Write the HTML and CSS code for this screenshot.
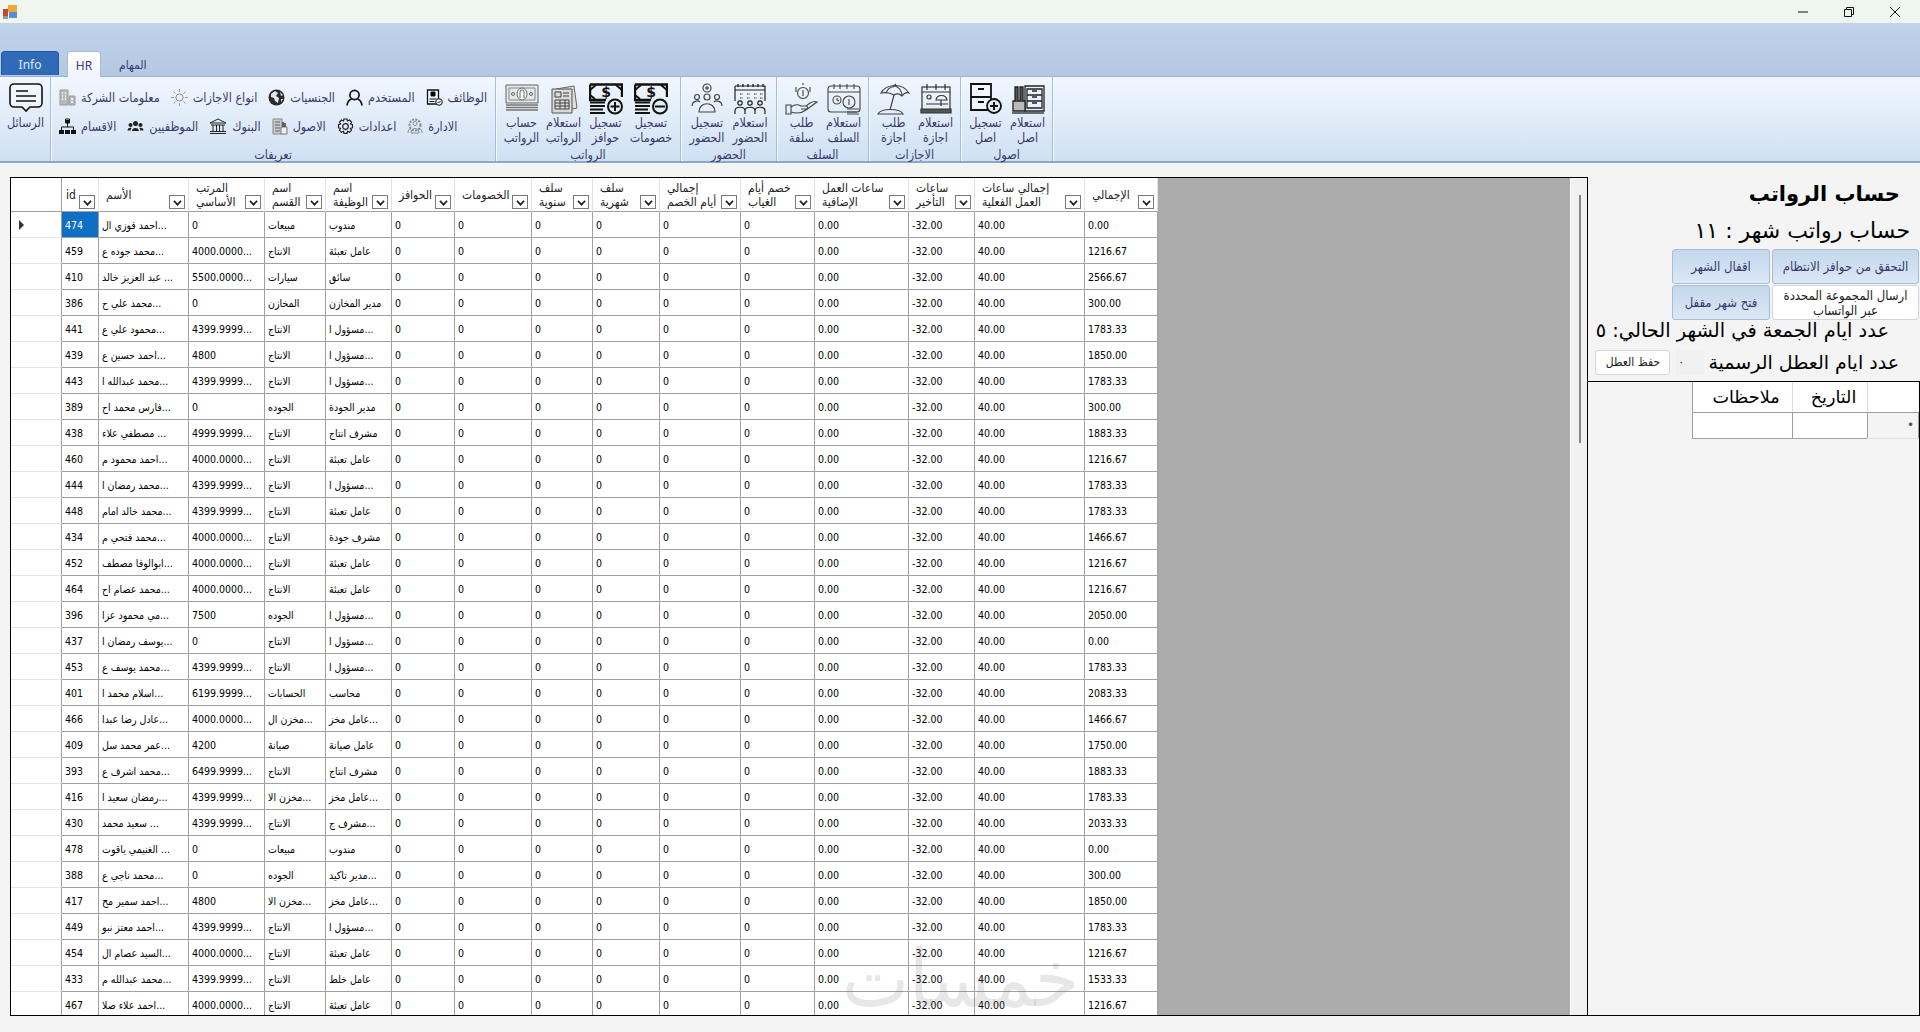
FILE: index.html
```html
<!DOCTYPE html>
<html lang="ar">
<head>
<meta charset="utf-8">
<title>حساب الرواتب</title>
<link rel="stylesheet" href="styles.css">
</head>
<body>
<header class="titlebar">
  <svg class="app-icon" width="14" height="14" viewBox="0 0 14 14"><rect x="5" y="0" width="9" height="7" fill="#f0a63c"/><rect x="6" y="7" width="8" height="6" fill="#4f8fdc"/><rect x="0" y="4" width="5" height="7" fill="#c8452c"/><rect x="0" y="11" width="5" height="3" fill="#999"/></svg>
  <div class="winctl">
    <svg width="12" height="12" viewBox="0 0 12 12"><path d="M1 6h10" stroke="#111" fill="none"/></svg>
    <svg width="12" height="12" viewBox="0 0 12 12"><path d="M1.5 3.5h7v7h-7zM3.5 3.5v-2h7v7h-2" stroke="#111" fill="none"/></svg>
    <svg width="12" height="12" viewBox="0 0 12 12"><path d="M1 1l10 10M11 1L1 11" stroke="#111" fill="none"/></svg>
  </div>
</header>
<nav class="tabs">
  <span class="tab tab-info">Info</span>
  <span class="tab tab-active">HR</span>
  <span class="tab">المهام</span>
</nav>
<section class="ribbon">
  <div class="group g-msg">
    <div class="g-body">
      <div class="lbtn">
        <svg width="34" height="30" viewBox="0 0 34 30"><path d="M5 1h24a4 4 0 0 1 4 4v15a4 4 0 0 1-4 4h-8l-4 4-4-4H5a4 4 0 0 1-4-4V5a4 4 0 0 1 4-4z" fill="#fff" fill-opacity=".3" stroke="#111" stroke-width="1.6"/><path d="M7 8h12M7 13h20M7 18h20" stroke="#111" stroke-width="1.6"/></svg>
        <span class="lbl">الرسائل</span>
      </div>
    </div>
  </div>
  <div class="group g-def">
    <div class="g-rows">
      <div class="srow">
        <span class="sbtn"><svg width="17" height="17" viewBox="0 0 17 17"><path d="M1 1h8v15H1zM10 7h6v9h-6z" fill="#b9b9b9" stroke="#999"/><path d="M3 4h1M6 4h1M3 7h1M6 7h1M3 10h1M6 10h1M12 10h2M12 13h2" stroke="#fff" stroke-width="1.5"/></svg><i>معلومات الشركة</i></span>
        <span class="sbtn"><svg width="17" height="17" viewBox="0 0 17 17"><circle cx="8.5" cy="8.5" r="3.6" fill="none" stroke="#888"/><path d="M8.5 0v3M8.5 14v3M0 8.5h3M14 8.5h3M2.5 2.5l2 2M12.5 12.5l2 2M14.5 2.5l-2 2M4.5 12.5l-2 2" stroke="#999"/></svg><i>انواع الاجازات</i></span>
        <span class="sbtn"><svg width="17" height="17" viewBox="0 0 17 17"><circle cx="8.5" cy="8.5" r="8" fill="#2b2b2b"/><path d="M3 5l4-3 3 2-2 3 3 2-1 5-3-2-1-3-3-1zM12 3l3 3-2 1zM13 10l2 0-2 3z" fill="#dfe8f3"/></svg><i>الجنسيات</i></span>
        <span class="sbtn"><svg width="17" height="17" viewBox="0 0 17 17"><circle cx="8.5" cy="6" r="4.6" fill="none" stroke="#111" stroke-width="1.7"/><path d="M1 16.5c.5-4 3-6 4.5-6.5M16 16.500c-.5-4-3-6-4.500-6.500" fill="none" stroke="#111" stroke-width="1.7"/></svg><i>المستخدم</i></span>
        <span class="sbtn"><svg width="17" height="17" viewBox="0 0 17 17"><path d="M1.500 1h11v14h-11z" fill="#fff" fill-opacity=".4" stroke="#111" stroke-width="1.300"/><path d="M5 3h4v4H5zM3.500 10h7M3.500 12.500h5" stroke="#111"/><circle cx="13" cy="13" r="3.300" fill="#e8f0f9" stroke="#111"/><path d="M11.500 13l1 1 2-2" fill="none" stroke="#111"/></svg><i>الوظائف</i></span>
      </div>
      <div class="srow">
        <span class="sbtn"><svg width="17" height="17" viewBox="0 0 17 17"><path d="M6.500 1h4v4h-4zM8.500 5v4M2.500 12V9h12v3" fill="none" stroke="#111"/><path d="M0 12h5v4H0zM6 12h5v4H6zM12 12h5v4h-5z" fill="#111"/><path d="M6.500 2h4v3h-4z" fill="#111"/></svg><i>الاقسام</i></span>
        <span class="sbtn"><svg width="17" height="17" viewBox="0 0 17 17"><g fill="#222"><circle cx="8.500" cy="5.500" r="2.500"/><circle cx="3.500" cy="7" r="2"/><circle cx="13.500" cy="7" r="2"/><path d="M5 13c0-4 7-4 7 0zM.5 12.500c0-3 3-3 4-2.500l-1 2.500zM16.500 12.500c0-3-3-3-4-2.500l1 2.500z"/></g></svg><i>الموظفيين</i></span>
        <span class="sbtn"><svg width="18" height="17" viewBox="0 0 18 17"><path d="M1 5l8-4 8 4zM2 7h14M1 15.500h16M1 13.500h16M4 7v6M7.500 7v6M10.500 7v6M14 7v6" fill="none" stroke="#222"/></svg><i>البنوك</i></span>
        <span class="sbtn"><svg width="16" height="17" viewBox="0 0 16 17"><path d="M1 1h9v15H1z" fill="#c9c9c9" stroke="#888"/><path d="M3 4h5M3 7h5M3 10h5M3 13h5" stroke="#666"/><path d="M9 9h6v7H9z" fill="#eee" stroke="#777"/><path d="M11 9V4M13 9V5" stroke="#333" stroke-width="1.400"/></svg><i>الاصول</i></span>
        <span class="sbtn"><svg width="17" height="17" viewBox="0 0 17 17"><path d="M7 1h3l.5 2 2-1 2 2.200-1 1.800 2 .7v3l-2 .6 1 1.900-2 2.100-2-1-.5 2H7l-.5-2-2 1-2-2.100 1-1.900-2-.6v-3l2-.7-1-1.800 2-2.200 2 1z" fill="none" stroke="#222" stroke-width="1.200"/><circle cx="8.500" cy="8.500" r="2.800" fill="none" stroke="#222" stroke-width="1.200"/></svg><i>اعدادات</i></span>
        <span class="sbtn"><svg width="16" height="17" viewBox="0 0 16 17"><g fill="none" stroke="#8a8a8a"><circle cx="8" cy="7" r="5.500" stroke-dasharray="2 1.200" stroke-width="2"/><circle cx="8" cy="5.500" r="2"/><path d="M4 15c0-6 8-6 8 0z"/><path d="M1 15c0-3 1-4 3-4M15 15c0-3-1-4-3-4"/></g></svg><i>الادارة</i></span>
      </div>
    </div>
    <div class="g-title">تعريفات</div>
  </div>
  <div class="group g-pay">
    <div class="g-body">
      <div class="lbtn">
        <svg width="34" height="32" viewBox="0 0 34 32"><path d="M1 2h32v18H1z" fill="#e4e8ea" stroke="#666"/><path d="M4 5h26v12H4z" fill="none" stroke="#888"/><ellipse cx="17" cy="11" rx="5" ry="6" fill="#fff" stroke="#666"/><path d="M15 15V9a2 2 0 0 1 4 0v6" fill="none" stroke="#666"/><circle cx="8" cy="11" r="1.500" fill="none" stroke="#666"/><circle cx="26" cy="11" r="1.500" fill="none" stroke="#666"/><path d="M1 22h32M1 24.500h32M1 27h32" stroke="#777" stroke-width="1.300"/></svg>
        <span class="lbl">حساب<br>الرواتب</span>
      </div>
      <div class="lbtn">
        <svg width="34" height="32" viewBox="0 0 34 32"><path d="M9 6l18-3 3 22-4 1z" fill="#ddd" stroke="#666"/><path d="M5 6h20v24H5z" fill="#d9d9d9" stroke="#555"/><path d="M8 9h6v5H8zM16 10h6M16 13h6M8 17h14v9H8zM8 20h14M8 23h14M13 17v9M18 17v9" fill="none" stroke="#444"/></svg>
        <span class="lbl">استعلام<br>الرواتب</span>
      </div>
      <div class="lbtn">
        <svg width="34" height="32" viewBox="0 0 34 32"><use href="#bill"/><path d="M26 19v9M21.500 23.500h9" stroke="#111" stroke-width="2"/></svg>
        <span class="lbl">تسجيل<br>حوافز</span>
      </div>
      <div class="lbtn lbtn-wide">
        <svg width="34" height="32" viewBox="0 0 34 32"><use href="#bill"/><path d="M21 23.500h10" stroke="#111" stroke-width="2"/></svg>
        <span class="lbl">تسجيل<br>خصومات</span>
      </div>
    </div>
    <div class="g-title">الرواتب</div>
  </div>
  <div class="group g-att">
    <div class="g-body">
      <div class="lbtn lbtn-m">
        <svg width="34" height="32" viewBox="0 0 34 32"><g fill="none" stroke="#444" stroke-width="1.200"><circle cx="17" cy="5" r="4"/><circle cx="17" cy="14" r="3"/><circle cx="7" cy="14" r="2.500"/><circle cx="27" cy="14" r="2.500"/><path d="M9 29c0-11 16-11 16 0zM2 23c0-5 6-6 8-4M32 23c0-5-6-6-8-4"/></g><circle cx="17" cy="5" r="1.800" fill="#555"/></svg>
        <span class="lbl">تسجيل<br>الحضور</span>
      </div>
      <div class="lbtn lbtn-m">
        <svg width="34" height="32" viewBox="0 0 34 32"><g fill="none" stroke="#222" stroke-width="1.200"><path d="M2 3h30v15M2 3v15M2 7h30"/><path d="M5 1v3M10 1v3M15 1v3M20 1v3M25 1v3M30 1v3" stroke-width="1.400"/><path d="M7 11h3M14 11h3M21 11h3M27 11h3M7 15h3M14 15h3M21 15h3M27 15h3" stroke-dasharray="1.500 1"/><circle cx="7" cy="20" r="2.200"/><circle cx="17" cy="20" r="2.200"/><circle cx="27" cy="20" r="2.200"/><path d="M2 31v-3c0-5 10-5 10 0v3M12 31v-3c0-5 10-5 10 0v3M22 31v-3c0-5 10-5 10 0v3"/></g></svg>
        <span class="lbl">استعلام<br>الحضور</span>
      </div>
    </div>
    <div class="g-title">الحضور</div>
  </div>
  <div class="group g-adv">
    <div class="g-body">
      <div class="lbtn">
        <svg width="34" height="32" viewBox="0 0 34 32"><g fill="none" stroke="#444" stroke-width="1.100"><circle cx="18" cy="10" r="5.500"/><path d="M18 7v6M11 4v5M25 4v5M18 0v2"/><path d="M1 22h5v9H1zM6 24c4-3 7-3 10-1h5c2 0 2 3 0 3h-5M6 29c6 2 11 1 15-2l11-8c-2-1-5 0-7 1l-4 3"/></g></svg>
        <span class="lbl">طلب<br>سلفة</span>
      </div>
      <div class="lbtn">
        <svg width="34" height="32" viewBox="0 0 34 32"><g fill="none" stroke="#444" stroke-width="1.100"><rect x="1" y="3" width="32" height="26" rx="3"/><path d="M1 9h32M7 1v5M13 1v5M20 1v5M27 1v5"/><circle cx="10" cy="17" r="4"/><path d="M10 15v2l2 1"/><circle cx="22" cy="19" r="6"/><path d="M22 16v6M20 26h12M20 29h10M20 31h12"/></g></svg>
        <span class="lbl">استعلام<br>السلف</span>
      </div>
    </div>
    <div class="g-title">السلف</div>
  </div>
  <div class="group g-vac">
    <div class="g-body">
      <div class="lbtn">
        <svg width="34" height="32" viewBox="0 0 34 32"><g fill="none" stroke="#444" stroke-width="1.200"><path d="M4 10C9 1 25-1 32 10c-3-1-5 0-7 3-2-2-5-3-8-1-3-2-8-3-13-2z"/><path d="M16 4l3-3M17 12l-4 15M25 13C25 8 22 4 18 3M9 10c1-3 4-6 9-7"/><path d="M1 31c3-6 22-6 25 0z"/></g></svg>
        <span class="lbl">طلب<br>اجازة</span>
      </div>
      <div class="lbtn">
        <svg width="34" height="32" viewBox="0 0 34 32"><g fill="none" stroke="#333" stroke-width="1.200"><rect x="3" y="4" width="28" height="24"/><path d="M3 9h28M8 1v6M17 1v6M26 1v6"/><circle cx="10" cy="14" r="2"/><path d="M17 17c1-6 10-6 11 0zM22 17v6M7 21h22"/><path d="M2 26h30v4H2z" fill="#555"/></g></svg>
        <span class="lbl">استعلام<br>اجازة</span>
      </div>
    </div>
    <div class="g-title">الاجازات</div>
  </div>
  <div class="group g-ast">
    <div class="g-body">
      <div class="lbtn">
        <svg width="34" height="32" viewBox="0 0 34 32"><path d="M2 1h20v26H2zM2 14h20M9 6h6M9 19h6" fill="#fff" fill-opacity=".3" stroke="#111" stroke-width="1.800"/><circle cx="25" cy="23" r="7" fill="#e3edf7" stroke="#111" stroke-width="1.800"/><path d="M25 19v8M21 23h8" stroke="#111" stroke-width="2"/></svg>
        <span class="lbl">تسجيل<br>اصل</span>
      </div>
      <div class="lbtn">
        <svg width="34" height="32" viewBox="0 0 34 32"><g fill="none" stroke="#222" stroke-width="1.300"><path d="M14 3h19v25H14zM16 6h15v6H16zM16 12h15v6H16zM16 18h15v7H16zM21 8h5M21 14h5M21 20h5"/><path d="M2 18h12v10H2z" fill="#bbb"/><path d="M4 18V4h3v14M9 18V4h3v14" fill="#555"/><path d="M1 30h32"/></g></svg>
        <span class="lbl">استعلام<br>اصل</span>
      </div>
    </div>
    <div class="g-title">اصول</div>
  </div>
</section>
<svg class="defs" width="0" height="0"><defs><g id="bill"><path d="M1 1.500h32V14M1 1.500V17h16" fill="none" stroke="#111" stroke-width="2.400"/><path d="M1 7l6-5M33 7l-6-5M1 12l5 4" fill="none" stroke="#111" stroke-width="2"/><text x="17" y="14" text-anchor="middle" class="dollar">$</text><path d="M1 19.500h15M1 23h15M1 26.500h13M1 30h15" stroke="#111" stroke-width="1.800"/><circle cx="26" cy="23.500" r="7" fill="#e3edf7" stroke="#111" stroke-width="2"/></g></defs></svg>
<main class="workspace">
  <div class="grid-pane">
    <div class="grid-view">
      <table class="grid">
        <colgroup><col class="w51"><col class="w37"><col class="w90"><col class="w76"><col class="w61"><col class="w66"><col class="w63"><col class="w77"><col class="w61"><col class="w67"><col class="w81"><col class="w74"><col class="w94"><col class="w66"><col class="w110"><col class="w73"></colgroup>
        <thead><tr>
          <th class="corner"></th>
          <th><div class="hd hd-id"><span>id</span><b class="dd"></b></div></th>
          <th><div class="hd"><span>الأسم</span><b class="dd"></b></div></th>
          <th><div class="hd"><span>المرتب<br>الأساسي</span><b class="dd"></b></div></th>
          <th><div class="hd"><span>اسم<br>القسم</span><b class="dd"></b></div></th>
          <th><div class="hd"><span>اسم<br>الوظيفة</span><b class="dd"></b></div></th>
          <th><div class="hd"><span>الحوافز</span><b class="dd"></b></div></th>
          <th><div class="hd"><span>الخصومات</span><b class="dd"></b></div></th>
          <th><div class="hd"><span>سلف<br>سنوية</span><b class="dd"></b></div></th>
          <th><div class="hd"><span>سلف<br>شهرية</span><b class="dd"></b></div></th>
          <th><div class="hd"><span>إجمالي<br>أيام الخصم</span><b class="dd"></b></div></th>
          <th><div class="hd"><span>خصم أيام<br>الغياب</span><b class="dd"></b></div></th>
          <th><div class="hd"><span>ساعات العمل<br>الإضافية</span><b class="dd"></b></div></th>
          <th><div class="hd"><span>ساعات<br>التأخير</span><b class="dd"></b></div></th>
          <th><div class="hd"><span>إجمالي ساعات<br>العمل الفعلية</span><b class="dd"></b></div></th>
          <th><div class="hd"><span>الإجمالي</span><b class="dd"></b></div></th>
        </tr></thead>
        <tbody>
<tr><th><i class="cur"></i><td class="sel">474<td>احمد فوزي ال...<td>0<td>مبيعات<td>مندوب<td>0<td>0<td>0<td>0<td>0<td>0<td>0.00<td>-32.00<td>40.00<td>0.00
<tr><th><td>459<td>محمد جوده ع...<td>4000.0000...<td>الانتاج<td>عامل تعبئة<td>0<td>0<td>0<td>0<td>0<td>0<td>0.00<td>-32.00<td>40.00<td>1216.67
<tr><th><td>410<td>عبد العزيز خالد ...<td>5500.0000...<td>سيارات<td>سائق<td>0<td>0<td>0<td>0<td>0<td>0<td>0.00<td>-32.00<td>40.00<td>2566.67
<tr><th><td>386<td>محمد علي ح...<td>0<td>المخازن<td>مدير المخازن<td>0<td>0<td>0<td>0<td>0<td>0<td>0.00<td>-32.00<td>40.00<td>300.00
<tr><th><td>441<td>محمود علي ع...<td>4399.9999...<td>الانتاج<td>مسؤول ا...<td>0<td>0<td>0<td>0<td>0<td>0<td>0.00<td>-32.00<td>40.00<td>1783.33
<tr><th><td>439<td>احمد حسين ع...<td>4800<td>الانتاج<td>مسؤول ا...<td>0<td>0<td>0<td>0<td>0<td>0<td>0.00<td>-32.00<td>40.00<td>1850.00
<tr><th><td>443<td>محمد عبدالله ا...<td>4399.9999...<td>الانتاج<td>مسؤول ا...<td>0<td>0<td>0<td>0<td>0<td>0<td>0.00<td>-32.00<td>40.00<td>1783.33
<tr><th><td>389<td>فارس محمد اح...<td>0<td>الجوده<td>مدير الجودة<td>0<td>0<td>0<td>0<td>0<td>0<td>0.00<td>-32.00<td>40.00<td>300.00
<tr><th><td>438<td>مصطفي علاء ...<td>4999.9999...<td>الانتاج<td>مشرف انتاج<td>0<td>0<td>0<td>0<td>0<td>0<td>0.00<td>-32.00<td>40.00<td>1883.33
<tr><th><td>460<td>احمد محمود م...<td>4000.0000...<td>الانتاج<td>عامل تعبئة<td>0<td>0<td>0<td>0<td>0<td>0<td>0.00<td>-32.00<td>40.00<td>1216.67
<tr><th><td>444<td>محمد رمضان ا...<td>4399.9999...<td>الانتاج<td>مسؤول ا...<td>0<td>0<td>0<td>0<td>0<td>0<td>0.00<td>-32.00<td>40.00<td>1783.33
<tr><th><td>448<td>محمد خالد امام...<td>4399.9999...<td>الانتاج<td>عامل تعبئة<td>0<td>0<td>0<td>0<td>0<td>0<td>0.00<td>-32.00<td>40.00<td>1783.33
<tr><th><td>434<td>محمد فتحي م...<td>4000.0000...<td>الانتاج<td>مشرف جودة<td>0<td>0<td>0<td>0<td>0<td>0<td>0.00<td>-32.00<td>40.00<td>1466.67
<tr><th><td>452<td>ابوالوفا مصطف...<td>4000.0000...<td>الانتاج<td>عامل تعبئة<td>0<td>0<td>0<td>0<td>0<td>0<td>0.00<td>-32.00<td>40.00<td>1216.67
<tr><th><td>464<td>محمد عصام اح...<td>4000.0000...<td>الانتاج<td>عامل تعبئة<td>0<td>0<td>0<td>0<td>0<td>0<td>0.00<td>-32.00<td>40.00<td>1216.67
<tr><th><td>396<td>مي محمود عزا...<td>7500<td>الجوده<td>مسؤول ا...<td>0<td>0<td>0<td>0<td>0<td>0<td>0.00<td>-32.00<td>40.00<td>2050.00
<tr><th><td>437<td>يوسف رمضان ا...<td>0<td>الانتاج<td>مسؤول ا...<td>0<td>0<td>0<td>0<td>0<td>0<td>0.00<td>-32.00<td>40.00<td>0.00
<tr><th><td>453<td>محمد يوسف ع...<td>4399.9999...<td>الانتاج<td>مسؤول ا...<td>0<td>0<td>0<td>0<td>0<td>0<td>0.00<td>-32.00<td>40.00<td>1783.33
<tr><th><td>401<td>اسلام محمد ا...<td>6199.9999...<td>الحسابات<td>محاسب<td>0<td>0<td>0<td>0<td>0<td>0<td>0.00<td>-32.00<td>40.00<td>2083.33
<tr><th><td>466<td>عادل رضا عبدا...<td>4000.0000...<td>مخزن ال...<td>عامل مخز...<td>0<td>0<td>0<td>0<td>0<td>0<td>0.00<td>-32.00<td>40.00<td>1466.67
<tr><th><td>409<td>عمر محمد سل...<td>4200<td>صيانة<td>عامل صيانة<td>0<td>0<td>0<td>0<td>0<td>0<td>0.00<td>-32.00<td>40.00<td>1750.00
<tr><th><td>393<td>محمد اشرف ع...<td>6499.9999...<td>الانتاج<td>مشرف انتاج<td>0<td>0<td>0<td>0<td>0<td>0<td>0.00<td>-32.00<td>40.00<td>1883.33
<tr><th><td>416<td>رمضان سعيد ا...<td>4399.9999...<td>مخزن الا...<td>عامل مخز...<td>0<td>0<td>0<td>0<td>0<td>0<td>0.00<td>-32.00<td>40.00<td>1783.33
<tr><th><td>430<td>سعيد محمد ...<td>4399.9999...<td>الانتاج<td>مشرف ج...<td>0<td>0<td>0<td>0<td>0<td>0<td>0.00<td>-32.00<td>40.00<td>2033.33
<tr><th><td>478<td>الغنيمي ياقوت ...<td>0<td>مبيعات<td>مندوب<td>0<td>0<td>0<td>0<td>0<td>0<td>0.00<td>-32.00<td>40.00<td>0.00
<tr><th><td>388<td>محمد ناجي ع...<td>0<td>الجوده<td>مدير تاكيد...<td>0<td>0<td>0<td>0<td>0<td>0<td>0.00<td>-32.00<td>40.00<td>300.00
<tr><th><td>417<td>احمد سمير مح...<td>4800<td>مخزن الا...<td>عامل مخز...<td>0<td>0<td>0<td>0<td>0<td>0<td>0.00<td>-32.00<td>40.00<td>1850.00
<tr><th><td>449<td>احمد معتز نبو...<td>4399.9999...<td>الانتاج<td>مسؤول ا...<td>0<td>0<td>0<td>0<td>0<td>0<td>0.00<td>-32.00<td>40.00<td>1783.33
<tr><th><td>454<td>السيد عصام ال...<td>4000.0000...<td>الانتاج<td>عامل تعبئة<td>0<td>0<td>0<td>0<td>0<td>0<td>0.00<td>-32.00<td>40.00<td>1216.67
<tr><th><td>433<td>محمد عبدالله م...<td>4399.9999...<td>الانتاج<td>عامل خلط<td>0<td>0<td>0<td>0<td>0<td>0<td>0.00<td>-32.00<td>40.00<td>1533.33
<tr><th><td>467<td>احمد علاء صلا...<td>4000.0000...<td>الانتاج<td>عامل تعبئة<td>0<td>0<td>0<td>0<td>0<td>0<td>0.00<td>-32.00<td>40.00<td>1216.67
        </tbody>
      </table>
    </div>
    <div class="vscroll"><span class="thumb"></span></div>
  </div>
  <aside class="side">
    <div class="form">
      <h1>حساب الرواتب</h1>
      <p class="month">حساب رواتب شهر : ١١</p>
      <div class="actions">
        <button class="btn">التحقق من حوافز الانتظام</button>
        <button class="btn">اقفال الشهر</button>
        <button class="btn btn-white">ارسال المجموعة المحددة<br>عبر الواتساب</button>
        <button class="btn">فتح شهر مقفل</button>
      </div>
      <p class="fridays">عدد ايام الجمعة في الشهر الحالي: ٥</p>
      <div class="holidays">
        <span class="hol-label">عدد ايام العطل الرسمية</span>
        <span class="hol-input">٠</span>
        <button class="btn btn-white btn-save">حفظ العطل</button>
      </div>
    </div>
    <div class="hol-pane">
      <table class="hol-table">
        <colgroup><col class="w51"><col class="w75"><col class="w100"></colgroup>
        <thead><tr><th></th><th>التاريخ</th><th>ملاحظات</th></tr></thead>
        <tbody><tr><td class="mark">•</td><td></td><td></td></tr></tbody>
      </table>
    </div>
  </aside>
  <div class="watermark">خمسات</div>
</main>
</body>
</html>
```

FILE: styles.css
```css
* { box-sizing: border-box; }
html, body { margin: 0; height: 100%; }
body {
  width: 1920px; height: 1032px; overflow: hidden;
  background: #f4f4f4; color: #000;
  font-family: "DejaVu Sans Condensed", "DejaVu Sans", sans-serif;
  display: flex; flex-direction: column;
}
.titlebar { height: 23px; flex: none; background: #eff5ef; display: flex; align-items: center; justify-content: space-between; padding-left: 3px; }
.winctl { display: flex; gap: 34px; padding-right: 19px; }
.tabs { height: 54px; flex: none; display: flex; align-items: flex-end; padding-left: 1px; background: linear-gradient(#c1d3ea, #b4c8e3); border-bottom: 1px solid #9db3d0; color: #3a3a78; font-size: 12px; }
.tab { height: 25px; display: flex; align-items: center; padding-top: 2px; margin: 0 0 0 18px; }
.tab-info { width: 58px; height: 24px; margin: 0 0 1px; justify-content: center; font-family: "Noto Sans", sans-serif; background: linear-gradient(#2f6bb8, #2e6ab7); border: 1px solid #1f58a5; border-bottom: 0; border-radius: 4px 4px 0 0; color: #dfe9f6; }
.tab-active { width: 34px; height: 26px; margin: 0 0 -1px 8px; justify-content: center; font-family: "Noto Sans", sans-serif; background: linear-gradient(#fff, #eff5fc); border: 1px solid #a9bdd7; border-bottom: 0; border-radius: 3px 3px 0 0; }
.ribbon { height: 86px; flex: none; display: flex; padding-left: 1px; background: linear-gradient(#f1f7fe, #cfe0f3); border-bottom: 2px solid #8ea8c8; color: #3a3a6e; font-size: 12.500px; }
.group { display: flex; flex-direction: column; border-right: 1px solid #a6bcd7; box-shadow: 1px 0 0 #f4f9ff; }
.g-msg { width: 50px; }
.g-def { width: 445px; }
.g-pay { width: 185px; }
.g-att { width: 96px; }
.g-adv { width: 92px; }
.g-vac { width: 92px; }
.g-ast { width: 92px; }
.g-body { height: 71px; display: flex; justify-content: center; }
.g-rows { height: 71px; padding: 11px 0 0 8px; display: flex; flex-direction: column; gap: 10px; }
.g-title { height: 13px; text-align: center; line-height: 13px; font-size: 12.500px; }
.lbtn { width: 42px; display: flex; flex-direction: column; align-items: center; padding-top: 6px; }
.lbtn-wide { width: 49px; }
.lbtn-m { width: 43px; }
.lbl { margin-top: 0; text-align: center; line-height: 15px; white-space: nowrap; height: 30px; }
.g-msg .lbl { margin-top: 2px; }
.g-msg svg { flex: none; }
.srow { display: flex; gap: 11px; height: 19px; align-items: center; }
.sbtn { display: flex; align-items: center; gap: 5px; white-space: nowrap; }
.sbtn i { font-style: normal; }
.defs { position: absolute; }
.dollar { font: bold 14px "DejaVu Sans", sans-serif; fill: #111; }
.workspace { position: relative; flex: none; height: 839px; margin-top: 14px; padding-left: 10px; display: flex; }
.grid-pane { width: 1578px; height: 839px; flex: none; border: 1px solid #000; display: flex; }
.grid-view { width: 1559px; background: #ababab; overflow: hidden; }
.vscroll { width: 17px; background: #f1f1f1; border-left: 1px solid #fff; padding: 17px 0 0 8px; }
.thumb { display: block; width: 2px; height: 248px; background: #868686; }
.grid { table-layout: fixed; width: 1147px; border-collapse: separate; border-spacing: 0; background: #fff; font-size: 10.500px; }
.grid th, .grid td { padding: 0; font-weight: 400; height: 26px; }
.grid td { border-right: 1px solid #a0a0a0; border-bottom: 1px solid #a0a0a0; padding: 0 3px; white-space: nowrap; overflow: hidden; text-align: left; vertical-align: middle; }
.grid tbody th { border-right: 1px solid #a0a0a0; border-bottom: 1px solid #e4e4e4; text-align: left; padding-left: 7px; }
.grid thead th { height: 34px; border-bottom: 1px solid #a0a0a0; border-right: 1px solid #e2e2e2; padding: 0; }
.grid thead .corner { border-right-color: #a0a0a0; }
.hd { height: 33px; display: flex; justify-content: space-between; align-items: center; padding: 0 3px 0 7px; line-height: 14px; color: #222; font-size: 12px; }
.hd-id { padding-left: 4px; }
.hd span { flex: 1; text-align: left; white-space: nowrap; }
.dd { flex: none; position: relative; width: 16px; height: 14px; margin-top: 14px; border: 1px solid #7a7a7a; background: #fff; }
.dd::after { content: ""; position: absolute; left: 4px; top: 2px; width: 5px; height: 5px; border: solid #222; border-width: 0 2px 2px 0; transform: rotate(45deg) scale(.85); }
.sel { background: #0f6fc6; color: #fff; }
.cur { display: block; width: 0; height: 0; border-left: 5px solid #333; border-top: 5px solid transparent; border-bottom: 5px solid transparent; margin-left: 1px; }
.w51 { width: 51px; } .w37 { width: 37px; } .w90 { width: 90px; } .w76 { width: 76px; } .w61 { width: 61px; }
.w66 { width: 66px; } .w63 { width: 63px; } .w77 { width: 77px; } .w67 { width: 67px; } .w81 { width: 81px; }
.w74 { width: 74px; } .w94 { width: 94px; } .w110 { width: 110px; } .w73 { width: 73px; }
.w75 { width: 75px; } .w100 { width: 100px; }
.side { width: 332px; flex: none; height: 839px; display: flex; flex-direction: column; font-family: "DejaVu Sans", sans-serif; }
.form { height: 204px; flex: none; direction: rtl; padding-top: 2px; }
h1 { margin: 0; height: 30px; padding-right: 20px; font-size: 21px; line-height: 30px; font-weight: 700; white-space: nowrap; }
.month { margin: 7px 0 0; height: 30px; padding-right: 10px; font-size: 22px; line-height: 30px; white-space: nowrap; }
.actions { display: grid; grid-template-columns: 147px 98px; grid-auto-rows: 35px; gap: 1px 2px; padding-right: 1px; margin-top: 3px; }
.btn { font-family: "DejaVu Sans Condensed", "DejaVu Sans", sans-serif; font-size: 13px; line-height: 15px; padding: 0; border: 1px solid #a9bcd4; border-radius: 3px; background: linear-gradient(#c4d7ec, #dbe8f6); color: #3a3a6e; direction: rtl; }
.btn-white { background: #fff; border-color: #cfd6de; color: #222; }
.fridays { margin: 0; height: 22px; padding-right: 31px; font-size: 19.400px; line-height: 22px; white-space: nowrap; }
.holidays { display: flex; align-items: center; height: 28px; margin-top: 6px; padding-right: 21px; }
.hol-label { font-size: 19px; white-space: nowrap; }
.hol-input { width: 28px; height: 26px; margin-right: 4px; background: #f0f0f0; font-size: 10px; text-align: left; line-height: 26px; padding-left: 2px; }
.btn-save { width: 75px; height: 25px; margin-right: 6px; font-size: 12px; }
.hol-pane { flex: 1; border-top: 1px solid #000; border-right: 1px solid #000; border-bottom: 1px solid #000; display: flex; justify-content: flex-end; align-items: flex-start; }
.hol-table { table-layout: fixed; width: 226px; direction: rtl; border-collapse: collapse; font-size: 17.600px; background: #fff; }
.hol-table th { height: 30px; font-weight: 400; padding-left: 8px; border-left: 1px solid #dcdcdc; border-bottom: 1px solid #a0a0a0; border-right: 0; }
.hol-table td { height: 26px; border-left: 1px solid #a0a0a0; border-bottom: 1px solid #a0a0a0; }
.hol-table th:last-child, .hol-table td:last-child { border-left: 1px solid #a0a0a0; }
.hol-table .mark { background: #f4f4f4; font-size: 12px; color: #555; text-align: left; padding-left: 39px; border-bottom-color: #e0e0e0; border-right: 1px solid #a0a0a0; }
.watermark { position: absolute; left: 842px; top: 762px; font-size: 79px; line-height: 80px; color: rgba(110, 110, 110, .17); pointer-events: none; }
```
